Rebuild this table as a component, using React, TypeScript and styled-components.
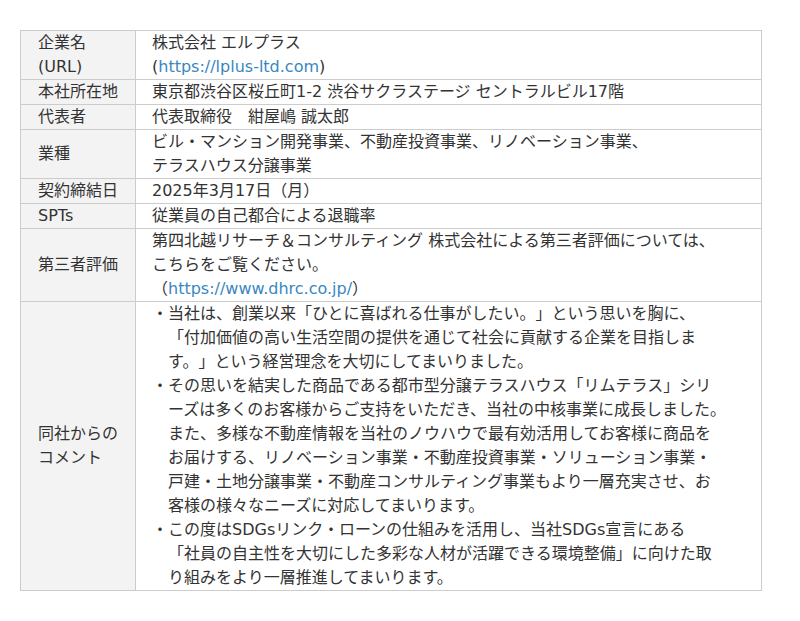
import styled, { createGlobalStyle } from 'styled-components';

const GlobalStyle = createGlobalStyle`
  body {
    margin: 0;
    background: #fff;
    font-family: "DejaVu Sans", "Noto Sans CJK JP", sans-serif;
  }
`;

const Page = styled.div`
  padding: 30px 38px 0 20px;
`;

const Table = styled.table`
  width: 742px;
  border-collapse: collapse;
  font-size: 16px;
  line-height: 24px;
  color: #333;
  text-spacing-trim: space-all;
`;

const Label = styled.th`
  width: 115px;
  box-sizing: border-box;
  padding: 0 8px 0 17px;
  background: #f3f3f3;
  border: 1px solid #ccc;
  font-weight: normal;
  text-align: left;
  vertical-align: middle;
`;

const Value = styled.td`
  padding: 0 16px;
  border: 1px solid #ccc;
  vertical-align: top;
`;

const Line = styled.div<{ $indent?: boolean }>`
  white-space: nowrap;
  padding-left: ${(p) => (p.$indent ? '1em' : '0')};
`;

const Link = styled.a`
  color: #3a87c0;
  text-decoration: none;
`;

type Row = { label: string[]; lines: React.ReactNode[] };

const comment: { text: string; indent?: boolean }[] = [
  { text: '・当社は、創業以来「ひとに喜ばれる仕事がしたい。」という思いを胸に、' },
  { text: '「付加価値の高い生活空間の提供を通じて社会に貢献する企業を目指しま', indent: true },
  { text: 'す。」という経営理念を大切にしてまいりました。', indent: true },
  { text: '・その思いを結実した商品である都市型分譲テラスハウス「リムテラス」シリ' },
  { text: 'ーズは多くのお客様からご支持をいただき、当社の中核事業に成長しました。', indent: true },
  { text: 'また、多様な不動産情報を当社のノウハウで最有効活用してお客様に商品を', indent: true },
  { text: 'お届けする、リノベーション事業・不動産投資事業・ソリューション事業・', indent: true },
  { text: '戸建・土地分譲事業・不動産コンサルティング事業もより一層充実させ、お', indent: true },
  { text: '客様の様々なニーズに対応してまいります。', indent: true },
  { text: '・この度はSDGsリンク・ローンの仕組みを活用し、当社SDGs宣言にある' },
  { text: '「社員の自主性を大切にした多彩な人材が活躍できる環境整備」に向けた取', indent: true },
  { text: 'り組みをより一層推進してまいります。', indent: true },
];

const rows: Row[] = [
  {
    label: ['企業名', '(URL)'],
    lines: [
      '株式会社 エルプラス',
      <>
        (<Link href="#">https://lplus-ltd.com</Link>)
      </>,
    ],
  },
  { label: ['本社所在地'], lines: ['東京都渋谷区桜丘町1-2 渋谷サクラステージ セントラルビル17階'] },
  { label: ['代表者'], lines: ['代表取締役　紺屋嶋 誠太郎'] },
  {
    label: ['業種'],
    lines: ['ビル・マンション開発事業、不動産投資事業、リノベーション事業、', 'テラスハウス分譲事業'],
  },
  { label: ['契約締結日'], lines: ['2025年3月17日（月）'] },
  { label: ['SPTs'], lines: ['従業員の自己都合による退職率'] },
  {
    label: ['第三者評価'],
    lines: [
      '第四北越リサーチ＆コンサルティング 株式会社による第三者評価については、',
      'こちらをご覧ください。',
      <>
        （<Link href="#">https://www.dhrc.co.jp/</Link>）
      </>,
    ],
  },
];

export default function App() {
  return (
    <Page>
      <GlobalStyle />
      <Table>
        <tbody>
          {rows.map((r, i) => (
            <tr key={i}>
              <Label>
                {r.label.map((l, j) => (
                  <Line key={j}>{l}</Line>
                ))}
              </Label>
              <Value>
                {r.lines.map((l, j) => (
                  <Line key={j}>{l}</Line>
                ))}
              </Value>
            </tr>
          ))}
          <tr>
            <Label>
              <Line>同社からの</Line>
              <Line>コメント</Line>
            </Label>
            <Value>
              {comment.map((c, j) => (
                <Line key={j} $indent={c.indent}>
                  {c.text}
                </Line>
              ))}
            </Value>
          </tr>
        </tbody>
      </Table>
    </Page>
  );
}
